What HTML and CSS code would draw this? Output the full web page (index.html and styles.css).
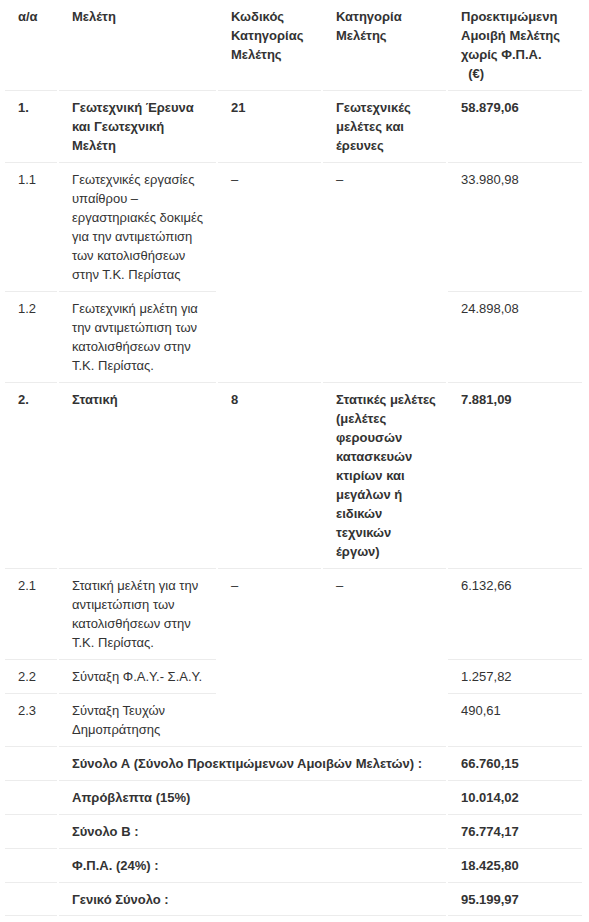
FILE: index.html
```html
<!DOCTYPE html>
<html lang="el">
<head>
<meta charset="utf-8">
<title>Πίνακας Μελετών</title>
<link rel="stylesheet" href="styles.css">
</head>
<body>
<div class="wrap">
<table class="fees">
  <colgroup>
    <col class="c1"><col class="c2"><col class="c3"><col class="c4"><col class="c5">
  </colgroup>
  <thead>
    <tr>
      <th>α/α</th>
      <th>Μελέτη</th>
      <th>Κωδικός Κατηγορίας Μελέτης</th>
      <th>Κατηγορία Μελέτης</th>
      <th>Προεκτιμώμενη Αμοιβή Μελέτης χωρίς Φ.Π.Α.<br>&nbsp;&nbsp;(€)</th>
    </tr>
  </thead>
  <tbody>
    <tr class="b">
      <td>1.</td>
      <td>Γεωτεχνική Έρευνα και Γεωτεχνική Μελέτη</td>
      <td>21</td>
      <td>Γεωτεχνικές μελέτες και έρευνες</td>
      <td>58.879,06</td>
    </tr>
    <tr>
      <td>1.1</td>
      <td>Γεωτεχνικές εργασίες υπαίθρου – εργαστηριακές δοκιμές για την αντιμετώπιση των κατολισθήσεων στην Τ.Κ. Περίστας</td>
      <td rowspan="2">–</td>
      <td rowspan="2">–</td>
      <td>33.980,98</td>
    </tr>
    <tr>
      <td>1.2</td>
      <td>Γεωτεχνική μελέτη για την αντιμετώπιση των κατολισθήσεων στην Τ.Κ. Περίστας.</td>
      <td>24.898,08</td>
    </tr>
    <tr class="b">
      <td>2.</td>
      <td>Στατική</td>
      <td>8</td>
      <td>Στατικές μελέτες<br>(μελέτες<br>φερουσών<br>κατασκευών<br>κτιρίων και<br>μεγάλων ή<br>ειδικών<br>τεχνικών<br>έργων)</td>
      <td>7.881,09</td>
    </tr>
    <tr>
      <td>2.1</td>
      <td>Στατική μελέτη για την αντιμετώπιση των κατολισθήσεων στην Τ.Κ. Περίστας.</td>
      <td rowspan="3">–</td>
      <td rowspan="3">–</td>
      <td>6.132,66</td>
    </tr>
    <tr>
      <td>2.2</td>
      <td>Σύνταξη Φ.Α.Υ.- Σ.Α.Υ.</td>
      <td>1.257,82</td>
    </tr>
    <tr>
      <td>2.3</td>
      <td>Σύνταξη Τευχών Δημοπράτησης</td>
      <td>490,61</td>
    </tr>
    <tr class="b">
      <td></td>
      <td colspan="3">Σύνολο Α (Σύνολο Προεκτιμώμενων Αμοιβών Μελετών) :</td>
      <td>66.760,15</td>
    </tr>
    <tr class="b">
      <td></td>
      <td colspan="3">Απρόβλεπτα (15%)</td>
      <td>10.014,02</td>
    </tr>
    <tr class="b">
      <td></td>
      <td colspan="3">Σύνολο Β :</td>
      <td>76.774,17</td>
    </tr>
    <tr class="b">
      <td></td>
      <td colspan="3">Φ.Π.Α. (24%) :</td>
      <td>18.425,80</td>
    </tr>
    <tr class="b last">
      <td></td>
      <td colspan="3">Γενικό Σύνολο :</td>
      <td>95.199,97</td>
    </tr>
  </tbody>
</table>
</div>
</body>
</html>
```

FILE: styles.css
```css
html, body {
  margin: 0;
  padding: 0;
  background: #ffffff;
}

.wrap {
  padding-left: 3px;
}

.fees {
  width: 581px;
  table-layout: fixed;
  border-collapse: separate;
  border-spacing: 2px 0;
  font-family: "Liberation Sans", Arial, sans-serif;
  font-size: 13px;
  line-height: 19px;
  color: #333333;
}

.c1 { width: 52px; }
.c2 { width: 157px; }
.c3 { width: 103px; }
.c4 { width: 123px; }
.c5 { width: 134px; }

.fees th,
.fees td {
  padding: 7px 8px 7px 13px;
  text-align: left;
  vertical-align: top;
}

.fees th {
  font-weight: bold;
  border: 0;
}

.fees td {
  border-top: 1px solid #ececec;
  font-weight: normal;
}

.fees tr.b td {
  font-weight: bold;
}

.fees tr.last td {
  border-bottom: 1px solid #ececec;
  padding-bottom: 6px;
}
```
